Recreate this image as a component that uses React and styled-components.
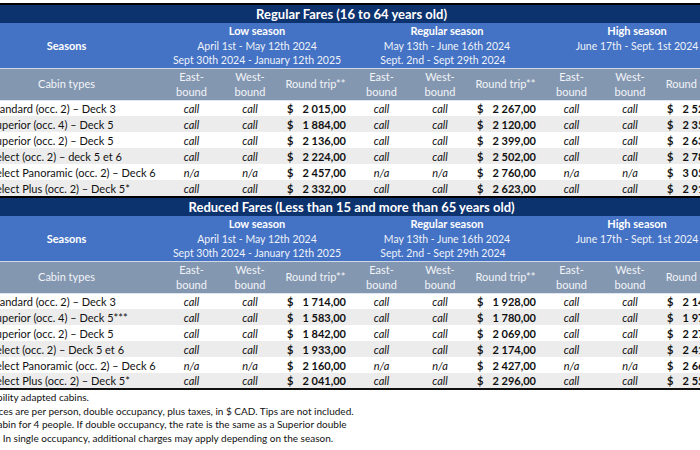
import React from 'react'
import styled, { createGlobalStyle } from 'styled-components'

const seasons = [
  { name: 'Low season', dates: ['April 1st - May 12th  2024', 'Sept 30th 2024 - January 12th 2025'] },
  { name: 'Regular season', dates: ['May 13th  - June 16th  2024', 'Sept. 2nd - Sept 29th 2024\u00a0\u00a0\u00a0'] },
  { name: 'High season', dates: ['June 17th  - Sept. 1st 2024'] },
]

const sections = [
  {
    title: 'Regular Fares (16 to 64 years old)',
    rows: [
      ['Standard (occ. 2) – Deck 3', 'call', ['2 015,00', '2 267,00', '2 521,00']],
      ['Superior (occ. 4) – Deck 5', 'call', ['1 884,00', '2 120,00', '2 358,00']],
      ['Superior (occ. 2) – Deck 5', 'call', ['2 136,00', '2 399,00', '2 633,00']],
      ['Select (occ. 2) – deck 5 et 6', 'call', ['2 224,00', '2 502,00', '2 781,00']],
      ['Select Panoramic (occ. 2) – Deck 6', 'n/a', ['2 457,00', '2 760,00', '3 054,00']],
      ['Select Plus (occ. 2) – Deck  5*', 'call', ['2 332,00', '2 623,00', '2 917,00']],
    ],
  },
  {
    title: 'Reduced Fares (Less than 15 and more than 65 years old)',
    rows: [
      ['Standard (occ. 2) – Deck 3', 'call', ['1 714,00', '1 928,00', '2 145,00']],
      ['Superior (occ. 4) – Deck 5***', 'call', ['1 583,00', '1 780,00', '1 972,00']],
      ['Superior (occ. 2) – Deck 5', 'call', ['1 842,00', '2 069,00', '2 270,00']],
      ['Select (occ. 2) – Deck 5 et 6', 'call', ['1 933,00', '2 174,00', '2 418,00']],
      ['Select Panoramic (occ. 2) – Deck 6', 'n/a', ['2 160,00', '2 427,00', '2 664,00']],
      ['Select Plus (occ. 2) – Deck 5*', 'call', ['2 041,00', '2 296,00', '2 553,00']],
    ],
  },
]

const notes = [
  '*Mobility adapted cabins.',
  '**Prices are per person, double occupancy, plus taxes, in $ CAD. Tips are not included.',
  '***Cabin for 4 people. If double occupancy, the rate is the same as a Superior double',
  '****\u00a0\u00a0 In single occupancy, additional charges may apply depending on the season.',
]

export default function App() {
  return (
    <Viewport>
      <GlobalStyle />
      <Sheet>
        {sections.map((section, i) => (
          <Table key={section.title} $last={i === sections.length - 1}>
            <colgroup>
              <col style={{ width: 191 }} />
              {seasons.map((s) => (
                <React.Fragment key={s.name}>
                  <col style={{ width: 59 }} />
                  <col style={{ width: 58 }} />
                  <col style={{ width: 73 }} />
                </React.Fragment>
              ))}
            </colgroup>
            <tbody>
              <tr>
                <Title colSpan={10}>{section.title}</Title>
              </tr>
              <tr>
                <SeasonLabel>Seasons</SeasonLabel>
                {seasons.map((s) => (
                  <SeasonCell key={s.name} colSpan={3}>
                    <SeasonName>{s.name}</SeasonName>
                    {s.dates.map((d) => (
                      <DateLine key={d}>{d}</DateLine>
                    ))}
                  </SeasonCell>
                ))}
              </tr>
              <tr>
                <SubHead>Cabin types</SubHead>
                {seasons.map((s) => (
                  <React.Fragment key={s.name}>
                    <SubHead>
                      East-
                      <br />
                      bound
                    </SubHead>
                    <SubHead>
                      West-
                      <br />
                      bound
                    </SubHead>
                    <SubHead>Round trip**</SubHead>
                  </React.Fragment>
                ))}
              </tr>
              {section.rows.map(([cabin, way, prices], r) => (
                <Row key={cabin} $alt={r % 2 === 1}>
                  <Cabin>{cabin}</Cabin>
                  {prices.map((p, k) => (
                    <React.Fragment key={k}>
                      <Call>{way}</Call>
                      <Call>{way}</Call>
                      <PriceCell>
                        <Price>
                          <span>$</span>
                          <span>{p.replace(' ', '\u00a0')}</span>
                        </Price>
                      </PriceCell>
                    </React.Fragment>
                  ))}
                </Row>
              ))}
            </tbody>
          </Table>
        ))}
      </Sheet>
      <Notes>
        {notes.map((n) => (
          <Note key={n}>{n}</Note>
        ))}
      </Notes>
    </Viewport>
  )
}

const GlobalStyle = createGlobalStyle`
  body {
    margin: 0;
    background: #fff;
    font-family: Lato, "Liberation Sans", sans-serif;
  }
`

const Viewport = styled.div`
  width: 700px;
  height: 450px;
  overflow: hidden;
  padding-top: 3px;
  box-sizing: border-box;
  color: #111;
`

const Sheet = styled.div`
  margin-left: -29px;
  width: 761px;
`

const Table = styled.table`
  width: 761px;
  table-layout: fixed;
  border-collapse: collapse;
  border-top: 2px solid #000;
  border-bottom: ${(p) => (p.$last ? '2px solid #111' : 'none')};
  font-size: 11px;

  td {
    padding: 0;
    white-space: nowrap;
    overflow: hidden;
  }
`

const Title = styled.td`
  height: 18px;
  background: #0d336f;
  color: #fff;
  font-weight: bold;
  font-size: 13px;
  text-align: center;
`

const SeasonLabel = styled.td`
  background: #4472c4;
  color: #fff;
  font-weight: bold;
  text-align: center;
  vertical-align: middle;
  height: 44px;
`

const SeasonCell = styled.td`
  background: #4472c4;
  color: #eef2fa;
  text-align: center;
  vertical-align: top;
  padding-top: 1px !important;
`

const SeasonName = styled.div`
  color: #fff;
  font-weight: bold;
  line-height: 14.5px;
`

const DateLine = styled.div`
  line-height: 14.5px;
  font-size: 10.5px;
`

const SubHead = styled.td`
  background: #8497b0;
  color: #f1f4f8;
  text-align: center;
  line-height: 15.5px;
  height: 30px;
  border-top: 1px solid #cfd8e6;
  border-bottom: 1px solid #dfe5ee;
`

const Row = styled.tr`
  height: 16px;
  background: ${(p) => (p.$alt ? '#ececec' : '#fff')};
`

const Cabin = styled.td`
  padding-left: 19px !important;
  text-align: left;
`

const Call = styled.td`
  text-align: center;
  font-style: italic;
`

const PriceCell = styled.td`
  font-weight: bold;
`

const Price = styled.div`
  display: flex;
  justify-content: space-between;
  padding: 0 6px 0 8px;
`

const Notes = styled.div`
  margin-left: -22px;
  padding-top: 1px;
  font-size: 10px;
  line-height: 13.5px;
`

const Note = styled.div`
  white-space: nowrap;
`
